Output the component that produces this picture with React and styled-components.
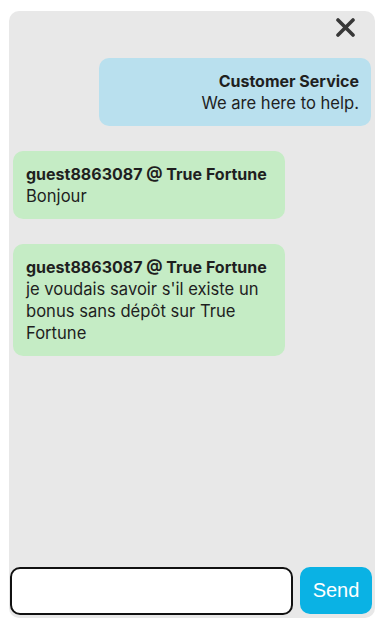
import React from 'react';
import styled, { createGlobalStyle } from 'styled-components';

const GlobalStyle = createGlobalStyle`
    html, body {
        margin: 0;
        padding: 0;
        background: #ffffff;
    }
    body {
        font-family: "Inter", "DejaVu Sans", sans-serif;
    }
`;

const Page = styled.div`
    width: 382px;
    height: 632px;
    box-sizing: border-box;
    padding: 11px 7px 14px 9px;
    display: flex;
`;

const Panel = styled.div`
    flex: 1;
    display: flex;
    flex-direction: column;
    background: #e8e8e8;
    border-radius: 10px;
    overflow: hidden;
`;

const Header = styled.div`
    display: flex;
    justify-content: flex-end;
    padding: 7px 20px 0 0;
    height: 40px;
    box-sizing: border-box;
`;

const CloseButton = styled.button`
    width: 19px;
    height: 19px;
    padding: 0;
    border: none;
    background: none;
    cursor: pointer;
    display: flex;
`;

const Messages = styled.div`
    flex: 1;
    display: flex;
    flex-direction: column;
    gap: 25px;
    padding: 7px 4px 0 4px;
`;

const Bubble = styled.div`
    width: 272px;
    box-sizing: border-box;
    padding: 12px 12px 12px 13px;
    border-radius: 10px;
    font-size: 16.6px;
    line-height: 22px;
    color: #1f1f1f;
    align-self: ${p => (p.$agent ? 'flex-end' : 'flex-start')};
    text-align: ${p => (p.$agent ? 'right' : 'left')};
    background: ${p => (p.$agent ? '#b9e0ee' : '#c5ecc5')};
`;

const Author = styled.div`
    font-weight: 700;
    font-size: 16px;
`;

const Footer = styled.div`
    display: flex;
    gap: 7px;
    padding: 0 3px 3px 1px;
`;

const Input = styled.input`
    width: 283px;
    height: 48px;
    box-sizing: border-box;
    border: 2px solid #111;
    border-radius: 10px;
    background: #fff;
    outline: none;
`;

const SendButton = styled.button`
    flex: 1;
    height: 47px;
    border: none;
    border-radius: 10px;
    background: #0ab2e4;
    color: #fff;
    font-family: "Liberation Sans", Arial, sans-serif;
    font-size: 20px;
    cursor: pointer;
`;

const messages = [
    { agent: true, author: 'Customer Service', text: 'We are here to help.' },
    { author: 'guest8863087 @ True Fortune', text: 'Bonjour' },
    { author: 'guest8863087 @ True Fortune', text: "je voudais savoir s'il existe un bonus sans dépôt sur True Fortune" },
];

const App = () => {
    return (
        <Page>
            <GlobalStyle />
            <Panel>
                <Header>
                    <CloseButton aria-label="Close">
                        <svg width="19" height="19" viewBox="0 0 19 19">
                            <path d="M2 2 L17 17 M17 2 L2 17" stroke="#383838" strokeWidth="3.6" strokeLinecap="round" />
                        </svg>
                    </CloseButton>
                </Header>
                <Messages>
                    {messages.map((m, i) => (
                        <Bubble key={i} $agent={m.agent}>
                            <Author>{m.author}</Author>
                            <div>{m.text}</div>
                        </Bubble>
                    ))}
                </Messages>
                <Footer>
                    <Input type="text" />
                    <SendButton>Send</SendButton>
                </Footer>
            </Panel>
        </Page>
    );
};

export default App;
